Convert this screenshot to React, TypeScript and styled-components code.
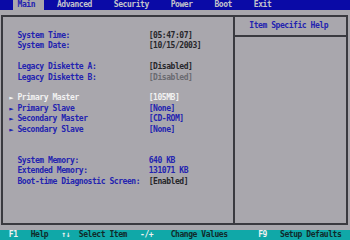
import styled, { createGlobalStyle } from "styled-components";

// Text-mode cell size (80 x 23 character screen)
const CW = 4.375;
const RH = 240 / 23;

const colors = {
  gray: "#a9a7ad",
  blue: "#2323b0",
  bar: "#0a0aa6",
  tabText: "#c4c4cc",
  white: "#f2f2f2",
  dark: "#26262a",
  dim: "#6a6a70",
  line: "#3a3a40",
  cyan: "#10a8a8",
  footDark: "#102a2a",
};

type Tone = "blue" | "white" | "dark" | "dim";

const GlobalStyle = createGlobalStyle`
  html, body {
    margin: 0;
    padding: 0;
    background: ${colors.gray};
  }
  body {
    width: 350px;
    height: 240px;
    overflow: hidden;
  }
`;

const Screen = styled.div`
  width: 350px;
  height: 240px;
  display: flex;
  flex-direction: column;
  background: ${colors.gray};
  font-family: "DejaVu Sans Mono", "Liberation Mono", monospace;
  font-size: 8px;
  font-weight: bold;
  letter-spacing: -0.44px;
  line-height: ${RH}px;
  color: ${colors.blue};
  overflow: hidden;
`;

const CharGrid = styled.div`
  display: grid;
  grid-template-columns: repeat(80, ${CW}px);
  grid-template-rows: ${RH}px;
  height: ${RH}px;
  flex: 0 0 ${RH}px;
  overflow: hidden;
`;

const TabBar = styled(CharGrid)`
  background: ${colors.bar};
`;

const Tab = styled.span<{ $col: number; $span: number; $active?: boolean }>`
  grid-row: 1;
  grid-column: ${(p) => p.$col + 1} / span ${(p) => p.$span};
  padding-left: ${CW}px;
  white-space: nowrap;
  background: ${(p) => (p.$active ? colors.gray : "transparent")};
  color: ${(p) => (p.$active ? colors.blue : colors.tabText)};
`;

const Frame = styled.div`
  flex: 1;
  margin: ${RH / 2 - 1}px 2.2px ${RH / 2 - 1}px 1.2px;
  border: 2px solid ${colors.line};
  display: flex;
`;

const MainPanel = styled.section`
  flex: 0 0 229.87px;
  padding: ${RH + RH / 2 - 1.4}px 0 0 5.56px;
  box-sizing: border-box;
`;

const HelpPanel = styled.aside`
  flex: 1;
  display: flex;
  flex-direction: column;
  border-left: 2px solid ${colors.line};
`;

const HelpTitle = styled.div`
  height: ${2 * RH - 2}px;
  display: flex;
  align-items: center;
  padding-left: 14.3px;
  border-bottom: 2px solid ${colors.line};
  white-space: nowrap;
`;

const Row = styled.div`
  display: grid;
  grid-template-columns: ${2 * CW}px ${30 * CW}px 1fr;
  height: ${RH}px;
  white-space: nowrap;
`;

const Gap = styled.div<{ $lines: number }>`
  height: ${(p) => p.$lines * RH}px;
`;

const Text = styled.span<{ $tone: Tone }>`
  color: ${(p) => colors[p.$tone]};
`;

const Marker = styled.span<{ $tone: Tone }>`
  color: ${(p) => colors[p.$tone]};
  font-size: 7px;
  padding-left: 0.5px;
`;

const Footer = styled(CharGrid)`
  background: ${colors.cyan};
`;

const FootItem = styled.span<{ $col: number; $span: number; $key?: boolean }>`
  grid-row: 1;
  grid-column: ${(p) => p.$col + 1} / span ${(p) => p.$span};
  white-space: nowrap;
  color: ${(p) => (p.$key ? colors.white : colors.footDark)};
`;

type Item = {
  label: string;
  value: string;
  labelTone?: Tone;
  valueTone: Tone;
  sub?: boolean;
  gapBefore?: number;
};

const items: Item[] = [
  { label: "System Time:", value: "[05:47:07]", valueTone: "dark" },
  { label: "System Date:", value: "[10/15/2003]", valueTone: "dark" },
  { label: "Legacy Diskette A:", value: "[Disabled]", valueTone: "dark", gapBefore: 1 },
  { label: "Legacy Diskette B:", value: "[Disabled]", valueTone: "dim" },
  { label: "Primary Master", value: "[105MB]", labelTone: "white", valueTone: "white", sub: true, gapBefore: 1 },
  { label: "Primary Slave", value: "[None]", valueTone: "blue", sub: true },
  { label: "Secondary Master", value: "[CD-ROM]", valueTone: "blue", sub: true },
  { label: "Secondary Slave", value: "[None]", valueTone: "blue", sub: true },
  { label: "System Memory:", value: "640 KB", valueTone: "blue", gapBefore: 2 },
  { label: "Extended Memory:", value: "131071 KB", valueTone: "blue" },
  { label: "Boot-time Diagnostic Screen:", value: "[Enabled]", valueTone: "dark" },
];

const tabs = [
  { name: "Main", col: 3, span: 7, active: true },
  { name: "Advanced", col: 12, span: 12 },
  { name: "Security", col: 25, span: 12 },
  { name: "Power", col: 38, span: 9 },
  { name: "Boot", col: 48, span: 8 },
  { name: "Exit", col: 57, span: 8 },
];

const footer = [
  { text: "F1", col: 2, span: 4, key: true },
  { text: "Help", col: 7, span: 6 },
  { text: "↑↓", col: 14, span: 3, key: true },
  { text: "Select Item", col: 18, span: 13 },
  { text: "-/+", col: 32, span: 6, key: true },
  { text: "Change Values", col: 39, span: 18 },
  { text: "F9", col: 59, span: 4, key: true },
  { text: "Setup Defaults", col: 64, span: 16 },
];

const App = () => {
  return (
    <>
      <GlobalStyle />
      <Screen>
        <TabBar>
          {tabs.map((t) => (
            <Tab key={t.name} $col={t.col} $span={t.span} $active={t.active}>
              {t.name}
            </Tab>
          ))}
        </TabBar>
        <Frame>
          <MainPanel>
            {items.map((it) => {
              const labelTone = it.labelTone ?? "blue";
              return (
                <div key={it.label}>
                  {it.gapBefore ? <Gap $lines={it.gapBefore} /> : null}
                  <Row>
                    <Marker $tone={labelTone}>{it.sub ? "►" : ""}</Marker>
                    <Text $tone={labelTone}>{it.label}</Text>
                    <Text $tone={it.valueTone}>{it.value}</Text>
                  </Row>
                </div>
              );
            })}
          </MainPanel>
          <HelpPanel>
            <HelpTitle>Item Specific Help</HelpTitle>
          </HelpPanel>
        </Frame>
        <Footer>
          {footer.map((f) => (
            <FootItem key={f.text} $col={f.col} $span={f.span} $key={f.key}>
              {f.text}
            </FootItem>
          ))}
        </Footer>
      </Screen>
    </>
  );
};

export default App;
